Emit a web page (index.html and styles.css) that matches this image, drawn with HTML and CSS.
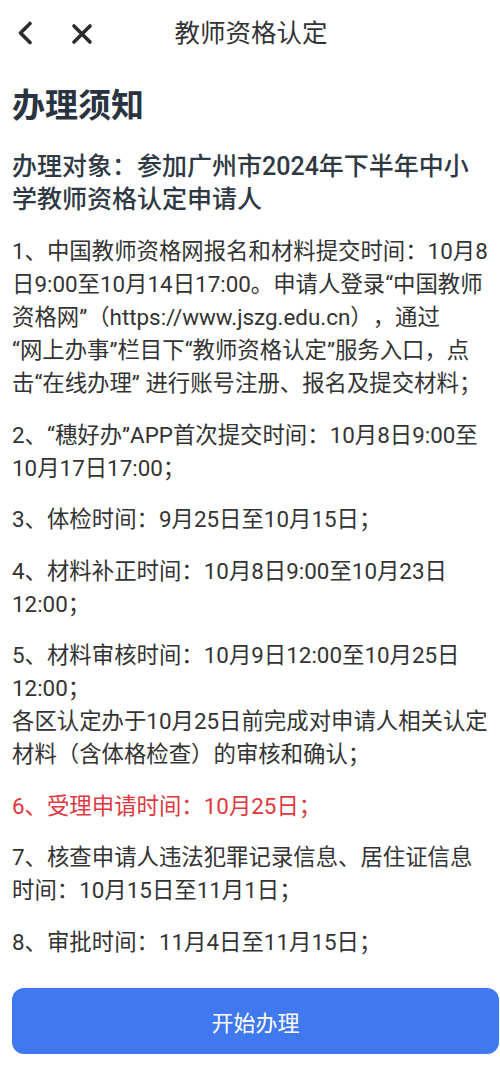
FILE: index.html
```html
<!DOCTYPE html>
<html lang="zh-CN">
<head>
<meta charset="utf-8">
<title>教师资格认定</title>
<link rel="stylesheet" href="styles.css">
</head>
<body>
<div class="page">
  <header class="topbar">
    <div class="nav-icons">
      <span class="icon icon-back">
        <svg width="16" height="24" viewBox="0 0 16 24"><path d="M13 2.5 L3.5 12 L13 21.5" fill="none" stroke="#2b2b2b" stroke-width="3.6" stroke-linecap="round" stroke-linejoin="round"/></svg>
      </span>
      <span class="icon icon-close">
        <svg width="22" height="22" viewBox="0 0 22 22"><path d="M3 3 L19 19 M19 3 L3 19" fill="none" stroke="#2b2b2b" stroke-width="3.6" stroke-linecap="round"/></svg>
      </span>
    </div>
    <div class="title">教师资格认定</div>
    <div class="spacer"></div>
  </header>

  <main class="content">
    <h1 class="heading">办理须知</h1>
    <p class="target">办理对象：参加广州市2024年下半年中小学教师资格认定申请人</p>

    <div class="items">
      <p class="item">1、中国教师资格网报名和材料提交时间：10月8日9:00至10月14日17:00。申请人登录“中国教师资格网”（https://www.jszg.edu.cn），通过<span class="term">“网上办事”</span>栏目下“教师资格认定”服务入口，点击“在线办理” 进行账号注册、报名及提交材料；</p>
      <p class="item">2、“穗好办”APP首次提交时间：10月8日9:00至10月17日17:00；</p>
      <p class="item">3、体检时间：9月25日至10月15日；</p>
      <p class="item">4、材料补正时间：10月8日9:00至10月23日12:00；</p>
      <p class="item">5、材料审核时间：10月9日12:00至10月25日12:00；<br>各区认定办于10月25日前完成对申请人相关认定材料（含体格检查）的审核和确认；</p>
      <p class="item item-red">6、受理申请时间：10月25日；</p>
      <p class="item">7、核查申请人违法犯罪记录信息、居住证信息时间：10月15日至11月1日；</p>
      <p class="item">8、审批时间：11月4日至11月15日；</p>
    </div>
  </main>

  <div class="footer">
    <button class="btn-start" type="button">开始办理</button>
  </div>
</div>
</body>
</html>
```

FILE: styles.css
```css
* {
  box-sizing: border-box;
}

html, body {
  margin: 0;
  padding: 0;
  background: #ffffff;
}

body {
  font-family: "Roboto", "Noto Sans CJK SC", "Noto Sans", sans-serif;
  color: #333333;
  text-spacing-trim: space-all;
}

.page {
  width: 500px;
  min-height: 1068px;
  display: flex;
  flex-direction: column;
}

.topbar {
  height: 66px;
  display: grid;
  grid-template-columns: 1fr auto 1fr;
  align-items: center;
}

.nav-icons {
  display: flex;
  align-items: center;
  padding-left: 17px;
  gap: 38px;
}

.icon {
  display: flex;
  align-items: center;
  justify-content: center;
}

.icon svg {
  display: block;
}

.icon-close {
  margin-top: 2px;
}

.title {
  font-size: 25.5px;
  line-height: 34px;
  color: #333333;
  padding-left: 2px;
}

.content {
  padding: 0 10px 0 12px;
}

.heading {
  margin: 20px 0 0;
  font-size: 33px;
  line-height: 40px;
  font-weight: 700;
  color: #2a3441;
}

.target {
  margin: 24px 0 0;
  font-size: 25px;
  line-height: 33px;
  font-weight: 500;
  color: #2f3944;
}

.items {
  margin-top: 19px;
  display: flex;
  flex-direction: column;
  gap: 18.5px;
}

.item {
  margin: 0;
  font-size: 22.4px;
  line-height: 33px;
  color: #333333;
}

.term {
  white-space: nowrap;
}

.item-red {
  color: #e0383e;
}

.footer {
  padding: 29px 1px 0 12px;
}

.btn-start {
  display: block;
  width: 100%;
  height: 66px;
  border: none;
  border-radius: 12px;
  background: #4078ef;
  color: #ffffff;
  font-family: "Roboto", "Noto Sans CJK SC", sans-serif;
  font-size: 22px;
  cursor: pointer;
}
```
